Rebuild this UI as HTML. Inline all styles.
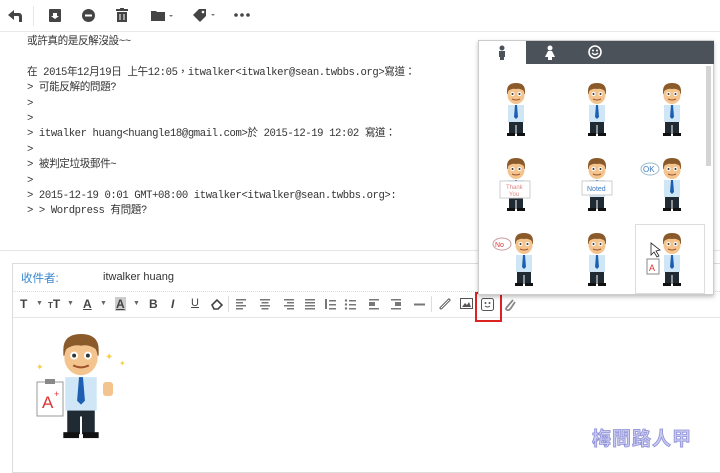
<!DOCTYPE html>
<html><head><meta charset="utf-8"><style>
*{margin:0;padding:0;box-sizing:border-box}
body{width:720px;height:462px;overflow:hidden;background:#fff;position:relative;font-family:"Liberation Sans","Noto Sans CJK TC",sans-serif;}
.abs{position:absolute}
.mail{position:absolute;left:27px;top:35px;font-family:"Liberation Mono","Noto Sans CJK TC",monospace;font-size:10.6px;color:#333;line-height:15.4px;white-space:pre;letter-spacing:-0.4px}
.tb svg{position:absolute}
.f{position:absolute;top:297px;font-size:12px;color:#444;font-weight:bold}
.d{position:absolute;top:300px;font-size:7px;color:#666}
</style></head><body>
<svg width="0" height="0" style="position:absolute">
<defs>
<symbol id="man" viewBox="0 0 24 56">
<path d="M3 9 Q3 1 12 1 Q21 1 21 9 L21 12 L3 12Z" fill="#8a5a2b"/>
<ellipse cx="12" cy="13" rx="8.5" ry="9" fill="#f4c48f"/>
<path d="M4 9 Q6 3 12 4 Q18 3 20 9 Q16 6 12 7 Q8 6 4 9Z" fill="#8a5a2b"/>
<circle cx="8.5" cy="12" r="2" fill="#fff"/><circle cx="15.5" cy="12" r="2" fill="#fff"/>
<circle cx="8.5" cy="12" r="1" fill="#333"/><circle cx="15.5" cy="12" r="1" fill="#333"/>
<path d="M8 17 Q12 19 16 17" stroke="#a0522d" fill="none"/>
<path d="M4 23 L20 23 L20 40 L4 40Z" fill="#cfe6f7"/>
<path d="M11 23 L13 23 L14 35 L12 37 L10 35Z" fill="#1d5fb0"/>
<rect x="5" y="40" width="14" height="12" fill="#1f2a33"/>
<rect x="11.5" y="43" width="1" height="9" fill="#fff"/>
<rect x="3" y="51" width="8" height="3" fill="#111"/><rect x="13" y="51" width="8" height="3" fill="#111"/>
</symbol>
</defs>
</svg>

<div class="tb">
<svg style="left:7px;top:9px" width="16" height="14" viewBox="0 0 16 14"><path d="M1 6 L7 1 L7 4 L12 4 Q15 4 15 8 L15 13 L12 13 L12 8 Q12 7 11 7 L7 7 L7 11Z" fill="#444"/></svg>
<div class="abs" style="left:33px;top:6px;width:1px;height:20px;background:#e6e6e6"></div>
<svg style="left:49px;top:9px" width="12" height="13"><rect width="12" height="13" rx="1" fill="#444"/><path d="M4 4 L8 4 L8 7 L10 7 L6 10 L2 7 L4 7Z" fill="#fff"/></svg>
<svg style="left:82px;top:9px" width="13" height="13"><circle cx="6.5" cy="6.5" r="6.5" fill="#444"/><rect x="3" y="5.5" width="7" height="2" fill="#fff"/></svg>
<svg style="left:116px;top:8px" width="12" height="14"><rect x="0" y="1" width="12" height="2" fill="#444"/><rect x="4" y="0" width="4" height="2" fill="#444"/><rect x="1" y="4" width="10" height="10" fill="#444"/><rect x="3.5" y="6" width="1" height="6" fill="#fff"/><rect x="7.5" y="6" width="1" height="6" fill="#fff"/></svg>
<svg style="left:151px;top:10px" width="24" height="11"><path d="M0 1 L5 1 L6 2 L14 2 L14 11 L0 11Z" fill="#444"/><path d="M18 5 L22 5 L20 7Z" fill="#777"/></svg>
<svg style="left:193px;top:8px" width="24" height="14"><path d="M0 7 L6 1 L13 1 L13 8 L7 14Z" fill="#444"/><circle cx="10" cy="4" r="1.3" fill="#fff"/><path d="M18 6 L22 6 L20 8Z" fill="#777"/></svg>
<svg style="left:234px;top:13px" width="16" height="4"><circle cx="2" cy="2" r="1.8" fill="#444"/><circle cx="8" cy="2" r="1.8" fill="#444"/><circle cx="14" cy="2" r="1.8" fill="#444"/></svg>
</div>
<div class="abs" style="left:0;top:31px;width:720px;height:1px;background:#e8e8e8"></div>

<div class="mail">或許真的是反解沒設~~

在 2015年12月19日 上午12:05，itwalker&lt;itwalker@sean.twbbs.org&gt;寫道：
&gt; 可能反解的問題?
&gt;
&gt;
&gt; itwalker huang&lt;huangle18@gmail.com&gt;於 2015-12-19 12:02 寫道：
&gt;
&gt; 被判定垃圾郵件~
&gt;
&gt; 2015-12-19 0:01 GMT+08:00 itwalker&lt;itwalker@sean.twbbs.org&gt;:
&gt; &gt; Wordpress 有問題?</div>

<div class="abs" style="left:0;top:250px;width:720px;height:1px;background:#e6e6e6"></div>
<div class="abs" style="left:12px;top:263px;width:720px;height:210px;border:1px solid #dcdcdc"></div>
<div class="abs" style="left:21px;top:270px;font-size:11.5px;color:#3b8ad0">收件者:</div>
<div class="abs" style="left:103px;top:271px;font-size:11px;color:#333">itwalker huang</div>
<div class="abs" style="left:13px;top:291px;width:707px;height:0;border-top:1px dotted #ddd"></div>
<div class="abs" style="left:13px;top:317px;width:707px;height:1px;background:#e6e6e6"></div>
<span class="f" style="left:20px">T</span><span class="d" style="left:36px">▼</span>
<span class="f" style="left:48px"><span style="font-size:8px">T</span>T</span><span class="d" style="left:67px">▼</span>
<span class="f" style="left:83px;text-decoration:underline">A</span><span class="d" style="left:100px">▼</span>
<span class="f" style="left:115px;text-decoration:underline;background:#ccc;padding:0 1px">A</span><span class="d" style="left:133px">▼</span>
<span class="f" style="left:149px">B</span>
<span class="f" style="left:171px;font-style:italic">I</span>
<span class="f" style="left:191px;font-weight:normal;text-decoration:underline;font-size:11px">U</span>
<svg class="abs" style="left:211px;top:298px" width="12" height="12"><path d="M1 7 L6 2 L11 7 L7 11 L3 11Z" fill="none" stroke="#444" stroke-width="1.6"/></svg>
<div class="abs" style="left:228px;top:296px;width:1px;height:16px;background:#ddd"></div>
<svg class="abs" style="left:236px;top:299px" width="190" height="11">
<g fill="#777">
<rect x="0" y="0" width="10" height="1.5"/><rect x="0" y="3" width="7" height="1.5"/><rect x="0" y="6" width="10" height="1.5"/><rect x="0" y="9" width="7" height="1.5"/>
<rect x="24" y="0" width="10" height="1.5"/><rect x="25.5" y="3" width="7" height="1.5"/><rect x="24" y="6" width="10" height="1.5"/><rect x="25.5" y="9" width="7" height="1.5"/>
<rect x="48" y="0" width="10" height="1.5"/><rect x="51" y="3" width="7" height="1.5"/><rect x="48" y="6" width="10" height="1.5"/><rect x="51" y="9" width="7" height="1.5"/>
<rect x="69" y="0" width="10" height="1.5"/><rect x="69" y="3" width="10" height="1.5"/><rect x="69" y="6" width="10" height="1.5"/><rect x="69" y="9" width="10" height="1.5"/>
<rect x="89" y="0" width="2" height="10"/><rect x="93" y="1" width="7" height="1.5"/><rect x="93" y="5" width="7" height="1.5"/><rect x="93" y="9" width="7" height="1.5"/>
<circle cx="110" cy="1.5" r="1.2"/><circle cx="110" cy="5.5" r="1.2"/><circle cx="110" cy="9.5" r="1.2"/><rect x="113" y="1" width="7" height="1.5"/><rect x="113" y="5" width="7" height="1.5"/><rect x="113" y="9" width="7" height="1.5"/>
<rect x="133" y="0" width="10" height="1.5"/><rect x="133" y="3" width="6" height="4"/><rect x="133" y="9" width="10" height="1.5"/>
<rect x="155" y="0" width="10" height="1.5"/><rect x="159" y="3" width="6" height="4"/><rect x="155" y="9" width="10" height="1.5"/>
<rect x="178" y="4.5" width="11" height="2"/>
</g></svg>
<div class="abs" style="left:431px;top:296px;width:1px;height:16px;background:#ddd"></div>
<svg class="abs" style="left:439px;top:298px" width="12" height="12"><path d="M2 10 L10 2" stroke="#555" stroke-width="3" stroke-linecap="round"/><path d="M2 10 L10 2" stroke="#fff" stroke-width="1" stroke-linecap="round"/></svg>
<svg class="abs" style="left:460px;top:298px" width="13" height="11"><rect x="0.5" y="0.5" width="12" height="10" fill="#fff" stroke="#555"/><path d="M2 9 L5 5 L7 7 L9 4 L11 9Z" fill="#555"/></svg>
<div class="abs" style="left:475px;top:292px;width:27px;height:30px;border:2px solid #d22"></div>
<svg class="abs" style="left:481px;top:298px" width="13" height="13"><rect x="0.5" y="0.5" width="12" height="12" rx="2" fill="#fff" stroke="#555"/><circle cx="4.5" cy="5" r="1" fill="#555"/><circle cx="8.5" cy="5" r="1" fill="#555"/><path d="M4 8 Q6.5 10 9 8" stroke="#555" fill="none"/></svg>
<svg class="abs" style="left:504px;top:297px" width="12" height="14"><path d="M9 3 L3 10 Q1 12 3 13 Q5 14 7 11 L11 5" stroke="#888" stroke-width="1.8" fill="none"/></svg>

<svg class="abs" style="left:35px;top:330px" width="95" height="115" viewBox="0 0 95 115">
<use href="#man" x="22" y="2" width="48" height="110"/>
<rect x="2" y="52" width="26" height="34" fill="#fff" stroke="#999"/>
<rect x="10" y="49" width="10" height="5" fill="#888"/>
<text x="7" y="78" font-size="17" fill="#d33" font-family="Liberation Sans">A</text><text x="19" y="67" font-size="9" fill="#d33" font-family="Liberation Sans">+</text>
<rect x="68" y="52" width="10" height="14" rx="3" fill="#f4c48f"/>
<text x="70" y="30" font-size="10" fill="#f5d04a">✦</text><text x="84" y="36" font-size="8" fill="#f5d04a">✦</text><text x="1" y="40" font-size="9" fill="#f5d04a">✦</text>
</svg>

<div class="abs" style="left:478px;top:40px;width:236px;height:255px;background:#fff;border:1px solid #ccc;box-shadow:0 2px 4px rgba(0,0,0,.25)">
<div class="abs" style="left:0;top:0;width:235px;height:23px;background:#4c525a"></div>
<div class="abs" style="left:0;top:0;width:47px;height:23px;background:#fff"></div>
<svg class="abs" style="left:19px;top:4px" width="8" height="15"><circle cx="4" cy="3" r="2.5" fill="#4c525a"/><rect x="1" y="6" width="6" height="6" fill="#4c525a"/><rect x="2" y="12" width="4" height="3" fill="#4c525a"/></svg>
<svg class="abs" style="left:66px;top:4px" width="10" height="15"><circle cx="5" cy="3" r="2.5" fill="#fff"/><path d="M3 6 L7 6 L10 12 L0 12Z" fill="#fff"/><rect x="3" y="12" width="4" height="3" fill="#fff"/></svg>
<svg class="abs" style="left:109px;top:4px" width="14" height="14"><circle cx="7" cy="7" r="6" fill="none" stroke="#fff" stroke-width="1.6"/><circle cx="5" cy="5.5" r="1" fill="#fff"/><circle cx="9" cy="5.5" r="1" fill="#fff"/><path d="M4 8 Q7 11 10 8" stroke="#fff" fill="none" stroke-width="1.4"/></svg>
<div class="abs" style="left:227px;top:25px;width:5px;height:100px;background:#d4d4d4"></div>
<div class="abs" style="left:156px;top:183px;width:70px;height:70px;border:1px solid #ddd"></div>
<svg class="abs" style="left:0;top:0" width="235" height="255">
<use href="#man" x="25" y="41" width="24" height="56"/>
<use href="#man" x="106" y="41" width="24" height="56"/>
<use href="#man" x="181" y="41" width="24" height="56"/>
<use href="#man" x="25" y="116" width="24" height="56"/>
<use href="#man" x="106" y="116" width="24" height="56"/>
<use href="#man" x="181" y="116" width="24" height="56"/>
<use href="#man" x="33" y="191" width="24" height="56"/>
<use href="#man" x="106" y="191" width="24" height="56"/>
<use href="#man" x="181" y="191" width="24" height="56"/>
<rect x="21" y="140" width="30" height="17" fill="#fff" stroke="#ccc"/><text x="27" y="148" font-size="6" fill="#d88">Thank</text><text x="30" y="155" font-size="6" fill="#d88">You</text>
<rect x="103" y="140" width="30" height="14" fill="#fff" stroke="#ccc"/><text x="108" y="150" font-size="7" fill="#3a78c2">Noted</text>
<ellipse cx="171" cy="128" rx="9" ry="6" fill="#fff" stroke="#9bc"/><text x="164" y="131" font-size="8" fill="#3a78c2">OK</text>
<ellipse cx="23" cy="203" rx="9" ry="6" fill="#fff" stroke="#c99"/><text x="16" y="206" font-size="7" fill="#d33">No</text>
<rect x="168" y="218" width="12" height="15" fill="#fff" stroke="#888"/><text x="170" y="230" font-size="9" fill="#d33">A</text>
<path d="M172 202 L172 214 L175 211 L178 216 L180 215 L177 210 L181 209Z" fill="#fff" stroke="#222" stroke-width="0.8"/>
</svg>
</div>

<div class="abs" style="left:592px;top:424px;font-size:19px;font-weight:bold;color:#c9cbf0;letter-spacing:1px;-webkit-text-stroke:0.8px #8e8fd6;font-family:'WenQuanYi Zen Hei','Noto Sans CJK TC',sans-serif">梅問路人甲</div>
</body></html>
